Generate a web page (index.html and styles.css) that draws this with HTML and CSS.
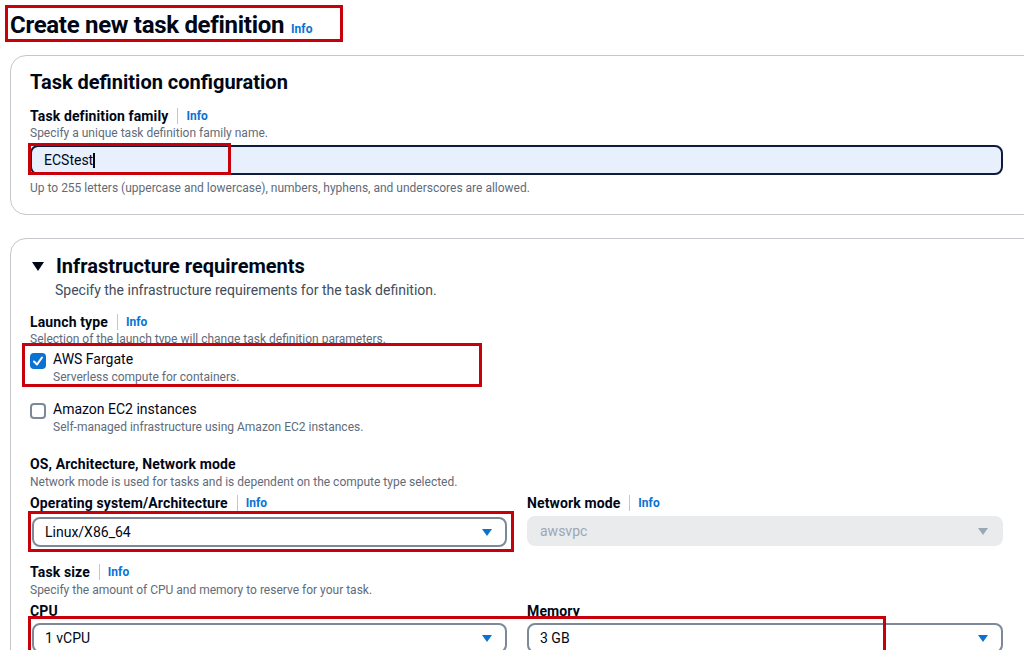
FILE: index.html
```html
<!DOCTYPE html>
<html lang="en">
<head>
<meta charset="utf-8">
<title>Create new task definition</title>
<link rel="stylesheet" href="styles.css">
</head>
<body>
<div class="page">
  <header class="title-mark">
    <h1>Create new task definition</h1>
    <a class="info info-title">Info</a>
  </header>

  <section class="card card-config">
    <h2 class="h2">Task definition configuration</h2>
    <div class="label label-first"><span>Task definition family</span><span class="sep"></span><a class="info">Info</a></div>
    <div class="desc desc-first">Specify a unique task definition family name.</div>
    <div class="input">
      <span class="input-text">ECStest</span><span class="text-caret"></span>
      <span class="mark mark-input"></span>
    </div>
    <div class="hint">Up to 255 letters (uppercase and lowercase), numbers, hyphens, and underscores are allowed.</div>
  </section>

  <section class="card card-infra">
    <div class="card-head">
      <svg class="expand" width="12" height="10" viewBox="0 0 12 10"><polygon points="0,0 12,0 6,9" fill="#000716"/></svg>
      <h2 class="h2">Infrastructure requirements</h2>
    </div>
    <p class="sub">Specify the infrastructure requirements for the task definition.</p>

    <div class="label label-launch"><span>Launch type</span><span class="sep"></span><a class="info">Info</a></div>
    <div class="desc desc-launch">Selection of the launch type will change task definition parameters.</div>

    <div class="option option-marked">
      <span class="checkbox checked">
        <svg width="16" height="16" viewBox="0 0 16 16"><polyline points="4,8.5 7,11.5 12,4.5" fill="none" stroke="#fff" stroke-width="2" stroke-linecap="round" stroke-linejoin="round"/></svg>
      </span>
      <div class="option-body">
        <div class="option-title">AWS Fargate</div>
        <div class="option-desc">Serverless compute for containers.</div>
      </div>
    </div>

    <div class="option option-plain">
      <span class="checkbox"></span>
      <div class="option-body">
        <div class="option-title">Amazon EC2 instances</div>
        <div class="option-desc">Self-managed infrastructure using Amazon EC2 instances.</div>
      </div>
    </div>

    <div class="label label-os">OS, Architecture, Network mode</div>
    <div class="desc desc-os">Network mode is used for tasks and is dependent on the compute type selected.</div>

    <div class="grid grid-labels">
      <div class="label"><span>Operating system/Architecture</span><span class="sep"></span><a class="info">Info</a></div>
      <div class="label"><span>Network mode</span><span class="sep"></span><a class="info">Info</a></div>
    </div>
    <div class="grid grid-os">
      <div class="select-mark">
        <div class="select"><span>Linux/X86_64</span>
          <svg class="arrow" width="10" height="7" viewBox="0 0 10 7"><polygon points="0,0 10,0 5,7" fill="#0972d3"/></svg>
        </div>
      </div>
      <div class="select select-disabled"><span>awsvpc</span>
        <svg class="arrow" width="10" height="7" viewBox="0 0 10 7"><polygon points="0,0 10,0 5,7" fill="#9ba7b6"/></svg>
      </div>
    </div>

    <div class="label label-size"><span>Task size</span><span class="sep"></span><a class="info">Info</a></div>
    <div class="desc desc-size">Specify the amount of CPU and memory to reserve for your task.</div>

    <div class="grid grid-size-labels">
      <div class="label">CPU</div>
      <div class="label">Memory</div>
    </div>
    <div class="grid grid-size">
      <div class="select select-left"><span>1 vCPU</span>
        <svg class="arrow" width="10" height="7" viewBox="0 0 10 7"><polygon points="0,0 10,0 5,7" fill="#0972d3"/></svg>
      </div>
      <div class="select"><span>3 GB</span>
        <svg class="arrow" width="10" height="7" viewBox="0 0 10 7"><polygon points="0,0 10,0 5,7" fill="#0972d3"/></svg>
      </div>
      <span class="mark mark-size"></span>
    </div>
  </section>
</div>
</body>
</html>
```

FILE: styles.css
```css
* { box-sizing: border-box; }

html, body {
  margin: 0;
  padding: 0;
  background: #ffffff;
  width: 1024px;
  height: 650px;
  overflow: hidden;
}

body {
  font-family: Roboto, "Liberation Sans", Arial, sans-serif;
  color: #000716;
  font-size: 14px;
}

.page {
  padding: 5px 0 0 5px;
}

/* Title */
.title-mark {
  display: inline-flex;
  align-items: baseline;
  width: 338px;
  height: 37px;
  border: 3px solid #c8000a;
  padding: 4px 0 0 2px;
}

h1 {
  margin: 0;
  font-size: 24px;
  line-height: 26px;
  font-weight: 700;
  letter-spacing: -0.3px;
}

.info {
  color: #0972d3;
  font-size: 12px;
  font-weight: 700;
  line-height: 16px;
  text-decoration: none;
  letter-spacing: 0;
}

.info-title {
  margin-left: 7px;
}

/* Cards */
.card {
  width: 1040px;
  margin-left: 5px;
  border: 1px solid #c6c6cd;
  border-radius: 16px;
  padding: 14px 46px 18px 19px;
}

.card-config {
  margin-top: 13px;
}

.card-infra {
  margin-top: 23px;
  padding-top: 15px;
  height: 500px;
}

.h2 {
  margin: 0;
  font-size: 20px;
  line-height: 24px;
  font-weight: 700;
}

.label {
  display: flex;
  align-items: center;
  font-size: 14px;
  line-height: 16px;
  font-weight: 700;
  letter-spacing: 0.12px;
  color: #000716;
}

.sep {
  display: inline-block;
  width: 1px;
  height: 16px;
  background: #c6c6cd;
  margin: 0 8px 0 9px;
}

.label-first { margin-top: 14px; }

.desc {
  font-size: 12px;
  line-height: 16px;
  color: #5f6b7a;
}

.desc-first { margin-top: 1px; }

.input {
  position: relative;
  display: flex;
  align-items: center;
  margin-top: 4px;
  height: 30px;
  background: #e8f0fe;
  border: 2px solid #0f1b3a;
  border-radius: 8px;
  padding-left: 12px;
  font-size: 14px;
}

.input-text { color: #000716; }

.text-caret {
  display: inline-block;
  width: 1.5px;
  height: 15px;
  background: #000716;
}

.mark {
  position: absolute;
  border: 3px solid #c8000a;
  pointer-events: none;
}

.mark-input {
  left: -4px;
  top: -4px;
  width: 203px;
  height: 32px;
}

.hint {
  margin-top: 5px;
  font-size: 12px;
  line-height: 16px;
  color: #5f6b7a;
}

/* Infra card */
.card-head {
  display: flex;
  align-items: center;
}

.expand {
  margin: 1px 12px 0 2px;
}

.sub {
  margin: 4px 0 0 25px;
  font-size: 14px;
  line-height: 16px;
  color: #414d5c;
}

.label-launch { margin-top: 16px; }

.desc-launch { margin-top: 1px; }

.option {
  display: flex;
  align-items: flex-start;
  gap: 7px;
}

.option-marked {
  position: relative;
  background: #ffffff;
  margin-top: -4px;
  margin-left: -8px;
  width: 460px;
  height: 44px;
  border: 3px solid #c8000a;
  padding: 4px 0 0 5px;
}

.option-plain {
  margin-top: 13px;
}

.checkbox {
  flex: none;
  width: 16px;
  height: 16px;
  margin-top: 3px;
  border: 2px solid #7d8998;
  border-radius: 4px;
  background: #fff;
}

.checkbox.checked {
  border: none;
  background: #0972d3;
}

.checkbox svg { display: block; }

.option-title {
  font-size: 14px;
  line-height: 18px;
  color: #000716;
}

.option-desc {
  margin-top: 2px;
  font-size: 12px;
  line-height: 14px;
  color: #5f6b7a;
}

.label-os { margin-top: 22px; }

.desc-os { margin-top: 2px; }

.grid {
  display: grid;
  grid-template-columns: 477px 476px;
  column-gap: 20px;
}

.grid-labels { margin-top: 5px; }

.select-mark {
  margin-left: -2px;
  margin-right: -7px;
  border: 3px solid #c8000a;
  padding: 3px 4px 2px 1px;
}

.select {
  position: relative;
  display: flex;
  align-items: center;
  justify-content: space-between;
  height: 30px;
  border: 2px solid #7d8998;
  border-radius: 8px;
  background: #fff;
  padding: 0 13px 0 11px;
  font-size: 14px;
  color: #000716;
}

.grid-os .select-disabled {
  margin-top: 5px;
  border-color: #e9ebed;
  background: #e9ebed;
  color: #9ba7b6;
}

.label-size { margin-top: 12px; }

.desc-size { margin-top: 2px; }

.grid-size-labels { margin-top: 5px; }

.grid-size {
  position: relative;
  margin-top: 4px;
}

.select-left { margin-left: 2px; }

.mark-size {
  left: -2px;
  top: -7px;
  width: 858px;
  height: 60px;
}
```
